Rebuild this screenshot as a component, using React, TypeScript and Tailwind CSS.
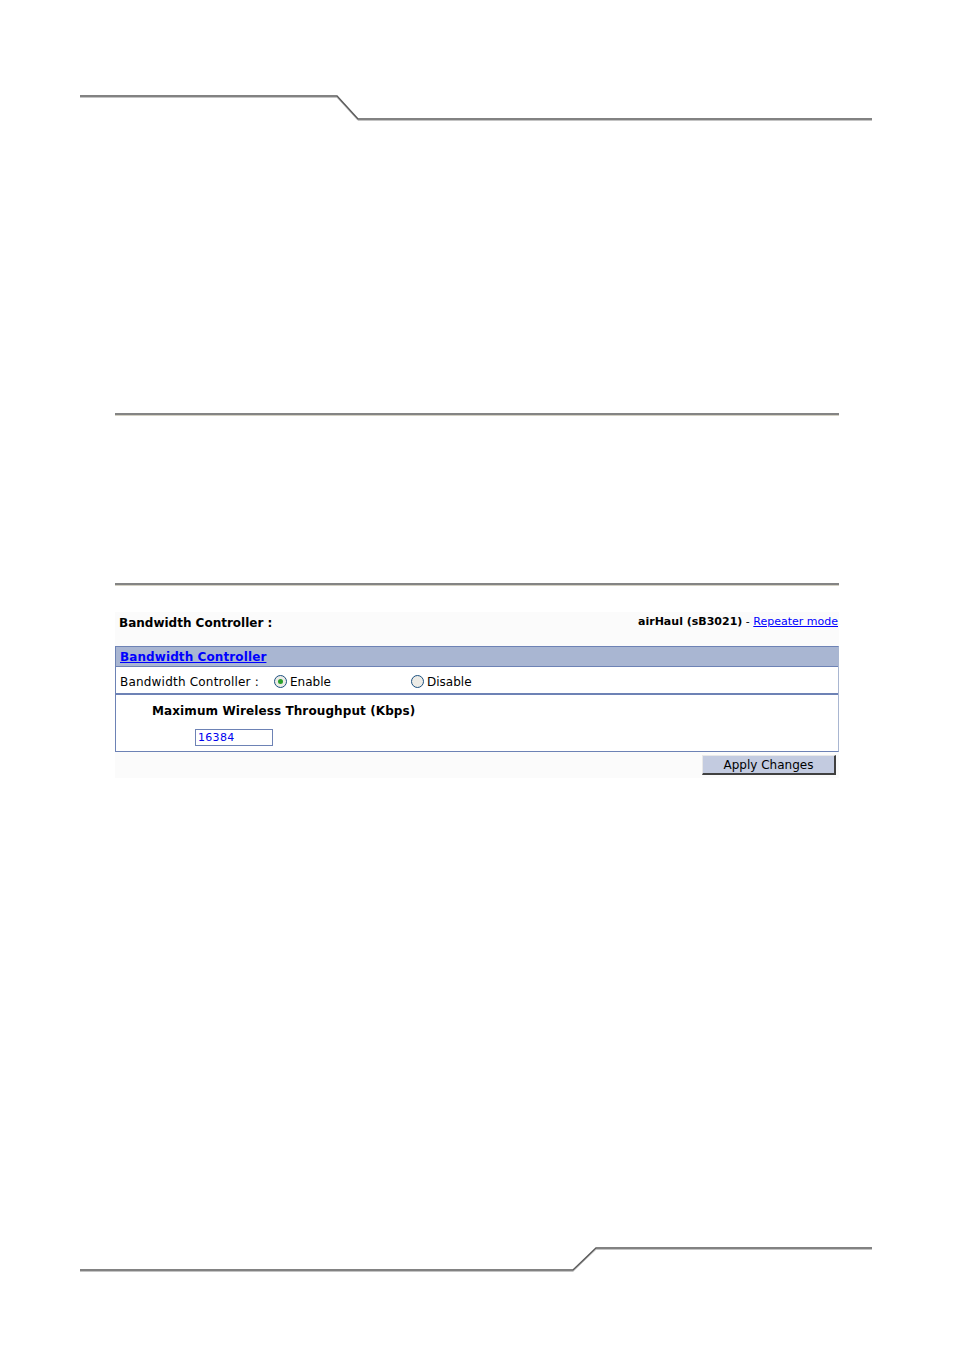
import React from "react";

function Radio({ checked }: { checked: boolean }) {
  return (
    <span className="relative inline-flex w-[13px] h-[13px] rounded-full border border-[#1c5180] bg-[#ecebe6] items-center justify-center">
      {checked && <span className="w-[5px] h-[5px] rounded-full bg-[#2aa02a]" />}
    </span>
  );
}

export default function App() {
  return (
    <div
      className="w-[954px] h-[1351px] bg-white flex flex-col"
      style={{ fontFamily: '"DejaVu Sans", Verdana, sans-serif' }}
    >
      <svg width="954" height="130" className="block shrink-0">
        <polyline points="80,97.5 337,97.5 358,120.5 872,120.5" fill="none" stroke="#c4c4c4" strokeWidth="1" />
        <polyline points="80,96 337,96 358,119 872,119" fill="none" stroke="#5a5a5a" strokeWidth="1.5" />
      </svg>

      <div className="mt-[283px] ml-[115px] w-[724px] h-[3px] border-t-2 border-[#848484] border-b border-b-[#d4d1c4]" />

      <div className="mt-[167px] ml-[115px] w-[724px] h-[3px] border-t-2 border-[#848484] border-b border-b-[#d4d1c4]" />

      <div className="mt-[26px] ml-[115px] w-[724px] bg-[#fbfbfb] flex flex-col">
        <div className="h-[34px] flex justify-between items-start pt-[3px] pl-[4px] pr-[1px]">
          <span className="text-[12px] leading-[16px] font-bold text-black">Bandwidth Controller :</span>
          <span className="text-[11px] leading-[14px] text-black">
            <span className="font-bold">airHaul (sB3021)</span>
            <span> - </span>
            <a href="#" className="text-[#0000ff] underline">Repeater mode</a>
          </span>
        </div>

        <div className="w-[724px] border border-[#6d82b5] border-r-[#a9b6d1] bg-white flex flex-col">
          <div className="h-[20px] bg-[#a9b6d2] flex items-center pl-[4px] border-b border-[#6d82b5]">
            <a href="#" className="text-[12px] leading-[16px] font-bold text-[#0000ff] underline tracking-[0.1px]">
              Bandwidth Controller
            </a>
          </div>
          <div className="h-[28px] flex items-center pt-[3px] pl-[4px] border-b-2 border-[#6d82b5]">
            <span className="w-[154px] text-[12px] leading-[16px] text-black tracking-[0.2px]">Bandwidth Controller :</span>
            <span className="w-[137px] flex items-center gap-[3px]">
              <Radio checked />
              <span className="text-[12px] leading-[16px] text-black">Enable</span>
            </span>
            <span className="flex items-center gap-[3px]">
              <Radio checked={false} />
              <span className="text-[12px] leading-[16px] text-black">Disable</span>
            </span>
          </div>
          <div className="h-[56px] flex flex-col pt-[8px]">
            <span className="ml-[36px] text-[12px] leading-[16px] font-bold text-black tracking-[0.1px]">
              Maximum Wireless Throughput (Kbps)
            </span>
            <div className="ml-[79px] mt-[10px] w-[78px] h-[17px] border border-[#6d82b5] bg-white flex items-center pl-[2px]">
              <span className="text-[11px] leading-[13px] text-[#0000ee] tracking-[0.3px]">16384</span>
            </div>
          </div>
        </div>

        <div className="h-[26px] flex justify-end items-start pt-[3px] pr-[3px]">
          <button className="w-[134px] h-[20px] bg-[#c3cbe0] border border-t-[#e8e8e8] border-l-[#e8e8e8] border-r-[#404040] border-b-[#404040] border-r-2 border-b-2 text-[12px] leading-[14px] text-black flex items-center justify-center">
            Apply Changes
          </button>
        </div>
      </div>

      <svg width="954" height="40" className="block shrink-0 mt-[462px]">
        <polyline points="80,31.5 573,31.5 596,9.5 872,9.5" fill="none" stroke="#c4c4c4" strokeWidth="1" />
        <polyline points="80,30 573,30 596,8 872,8" fill="none" stroke="#5a5a5a" strokeWidth="1.5" />
      </svg>
    </div>
  );
}
